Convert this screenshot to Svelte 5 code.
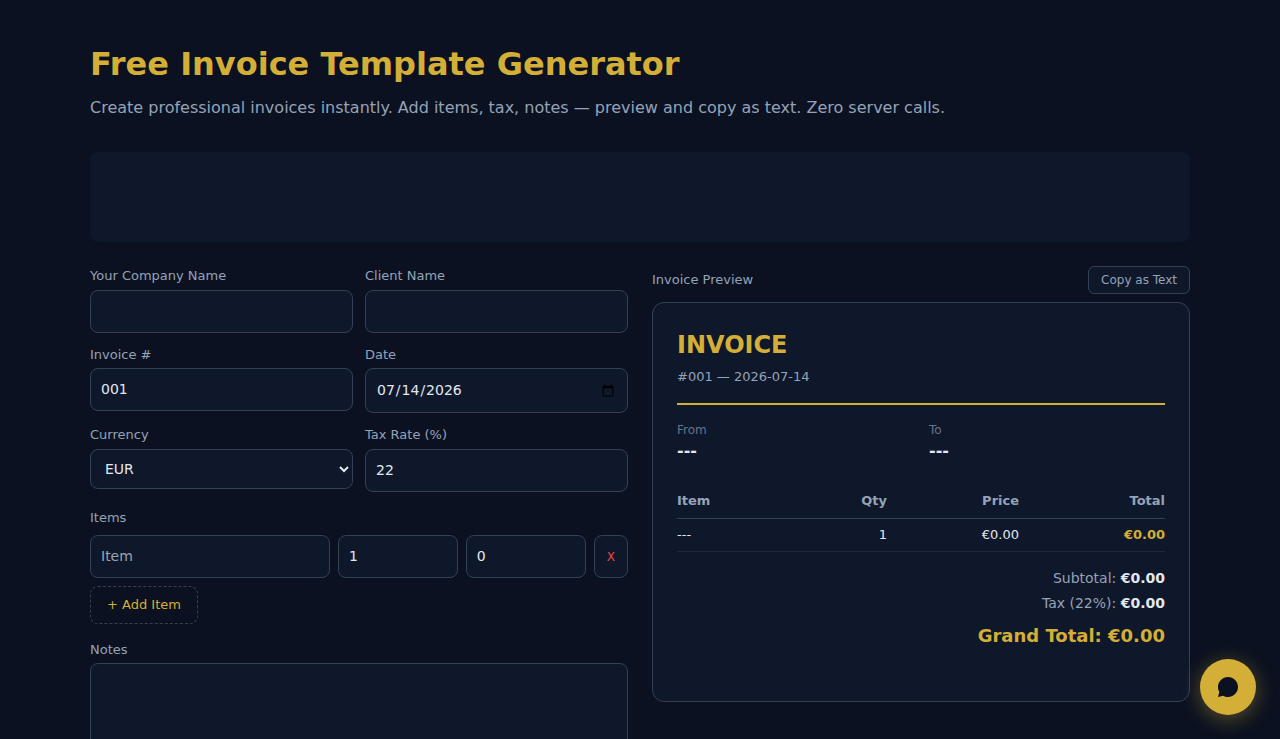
<script>
  let company = '';
  let client = '';
  let invoiceNumber = '001';
  let date = '2026-07-14';
  let currency = 'EUR';
  let taxRate = 22;
  let notes = '';
  let items = [{ name: '', qty: 1, price: 0 }];

  const symbols = { EUR: '€', USD: '$', GBP: '£' };

  $: symbol = symbols[currency];
  $: subtotal = items.reduce((sum, item) => sum + lineTotal(item), 0);
  $: tax = subtotal * ((Number(taxRate) || 0) / 100);
  $: grandTotal = subtotal + tax;

  function lineTotal(item) {
    return (Number(item.qty) || 0) * (Number(item.price) || 0);
  }

  function money(value, sym) {
    return sym + (Number(value) || 0).toFixed(2);
  }

  function addItem() {
    items = [...items, { name: '', qty: 1, price: 0 }];
  }

  function removeItem(index) {
    if (items.length > 1) {
      items = items.filter((_, i) => i !== index);
    }
  }

  function copyAsText() {
    const lines = [
      'INVOICE #' + invoiceNumber,
      'Date: ' + date,
      'From: ' + (company || '---'),
      'To: ' + (client || '---'),
      '',
      ...items.map((item) => `${item.name || '---'} x${item.qty} = ${money(lineTotal(item), symbol)}`),
      '',
      'Subtotal: ' + money(subtotal, symbol),
      `Tax (${taxRate}%): ` + money(tax, symbol),
      'Grand Total: ' + money(grandTotal, symbol)
    ];
    if (notes) lines.push('', notes);
    navigator.clipboard?.writeText(lines.join('\n'));
  }
</script>

<main class="container">
  <h1>Free Invoice Template Generator</h1>
  <p class="subtitle">Create professional invoices instantly. Add items, tax, notes — preview and copy as text. Zero server calls.</p>

  <div class="banner"></div>

  <div class="columns">
    <section class="form">
      <div class="fields">
        <div>
          <label for="company">Your Company Name</label>
          <input id="company" type="text" bind:value={company} />
        </div>
        <div>
          <label for="client">Client Name</label>
          <input id="client" type="text" bind:value={client} />
        </div>
        <div>
          <label for="number">Invoice #</label>
          <input id="number" type="text" bind:value={invoiceNumber} />
        </div>
        <div>
          <label for="date">Date</label>
          <input id="date" type="date" bind:value={date} />
        </div>
        <div>
          <label for="currency">Currency</label>
          <select id="currency" bind:value={currency}>
            <option>EUR</option>
            <option>USD</option>
            <option>GBP</option>
          </select>
        </div>
        <div>
          <label for="tax">Tax Rate (%)</label>
          <input id="tax" type="number" bind:value={taxRate} />
        </div>
      </div>

      <div class="items">
        <div class="items-label">Items</div>
        {#each items as item, i}
          <div class="item-row">
            <input type="text" placeholder="Item" aria-label="Item" bind:value={item.name} />
            <input type="number" aria-label="Quantity" bind:value={item.qty} />
            <input type="number" aria-label="Price" bind:value={item.price} />
            <button class="remove" type="button" on:click={() => removeItem(i)}>X</button>
          </div>
        {/each}
        <button class="add" type="button" on:click={addItem}>+ Add Item</button>
      </div>

      <div>
        <label for="notes">Notes</label>
        <textarea id="notes" rows="4" bind:value={notes}></textarea>
      </div>
    </section>

    <section>
      <div class="preview-header">
        <span>Invoice Preview</span>
        <button class="copy" type="button" on:click={copyAsText}>Copy as Text</button>
      </div>

      <div class="preview">
        <div class="invoice-head">
          <h2>INVOICE</h2>
          <div class="meta">#{invoiceNumber} — {date}</div>
        </div>

        <div class="parties">
          <div>
            <div class="party-label">From</div>
            <div class="party-name">{company || '---'}</div>
          </div>
          <div>
            <div class="party-label">To</div>
            <div class="party-name">{client || '---'}</div>
          </div>
        </div>

        <table>
          <thead>
            <tr>
              <th>Item</th>
              <th>Qty</th>
              <th>Price</th>
              <th>Total</th>
            </tr>
          </thead>
          <tbody>
            {#each items as item}
              <tr>
                <td>{item.name || '---'}</td>
                <td>{item.qty}</td>
                <td>{money(item.price, symbol)}</td>
                <td class="line-total">{money(lineTotal(item), symbol)}</td>
              </tr>
            {/each}
          </tbody>
        </table>

        <div class="totals">
          <div class="total-line">Subtotal: <strong>{money(subtotal, symbol)}</strong></div>
          <div class="total-line">Tax ({taxRate}%): <strong>{money(tax, symbol)}</strong></div>
          <div class="grand">Grand Total: {money(grandTotal, symbol)}</div>
        </div>

        {#if notes}
          <p class="preview-notes">{notes}</p>
        {/if}
      </div>
    </section>
  </div>
</main>

<button class="chat" type="button" aria-label="Open chat">
  <svg width="24" height="24" viewBox="0 0 24 24" fill="currentColor" aria-hidden="true">
    <path d="M12 2C6.48 2 2 6.48 2 12c0 1.82.49 3.53 1.34 5L2 22l5-1.34C8.47 21.51 10.18 22 12 22c5.52 0 10-4.48 10-10S17.52 2 12 2z" />
  </svg>
</button>

<style>
  :global(body) {
    margin: 0;
    background: #0b1120;
    color: #e2e8f0;
    font-family: "DejaVu Sans", sans-serif;
    font-size: 16px;
    line-height: 1.5;
  }

  .container {
    max-width: 1100px;
    margin: 0 auto;
    padding: 40px 20px;
  }

  h1 {
    margin: 0 0 8px;
    font-size: 32px;
    color: #d4af37;
  }

  .subtitle {
    margin: 0 0 32px;
    color: #94a3b8;
  }

  .banner {
    height: 90px;
    margin-bottom: 24px;
    border-radius: 8px;
    background: #0f172a;
  }

  .columns {
    display: grid;
    grid-template-columns: 1fr 1fr;
    align-items: start;
    gap: 24px;
  }

  .form {
    display: flex;
    flex-direction: column;
    gap: 16px;
  }

  .fields {
    display: grid;
    grid-template-columns: 1fr 1fr;
    gap: 12px;
  }

  label,
  .items-label {
    display: block;
    margin-bottom: 4px;
    font-size: 13px;
    color: #94a3b8;
  }

  .items-label {
    margin-bottom: 8px;
  }

  input,
  select,
  textarea {
    display: block;
    box-sizing: border-box;
    width: 100%;
    min-width: 0;
    margin: 0;
    padding: 10px;
    border: 1px solid #334155;
    border-radius: 8px;
    background: #0f172a;
    color: #e2e8f0;
    font-family: inherit;
    font-size: 14px;
    line-height: 1.5;
  }

  input::placeholder {
    color: #9ca3af;
  }

  textarea {
    resize: vertical;
  }

  button {
    font-family: inherit;
    line-height: 1.5;
    cursor: pointer;
  }

  .item-row {
    display: grid;
    grid-template-columns: 2fr 1fr 1fr auto;
    gap: 8px;
    margin-bottom: 8px;
  }

  .remove {
    padding: 0 12px;
    border: 1px solid #334155;
    border-radius: 8px;
    background: #0f172a;
    color: #ef4444;
    font-size: 12px;
  }

  .add {
    display: block;
    padding: 8px 16px;
    border: 1px dashed #334155;
    border-radius: 8px;
    background: transparent;
    color: #d4af37;
    font-size: 13px;
  }

  .preview-header {
    display: flex;
    align-items: center;
    justify-content: space-between;
    margin-bottom: 8px;
    font-size: 13px;
    color: #94a3b8;
  }

  .copy {
    padding: 4px 12px;
    border: 1px solid #334155;
    border-radius: 6px;
    background: #0f172a;
    color: #94a3b8;
    font-size: 12px;
  }

  .preview {
    box-sizing: border-box;
    min-height: 400px;
    padding: 24px;
    border: 1px solid #334155;
    border-radius: 12px;
    background: #0f172a;
  }

  .invoice-head {
    margin-bottom: 16px;
    padding-bottom: 16px;
    border-bottom: 2px solid #d4af37;
  }

  h2 {
    margin: 0 0 4px;
    font-size: 24px;
    color: #d4af37;
  }

  .meta {
    font-size: 13px;
    color: #94a3b8;
  }

  .parties {
    display: grid;
    grid-template-columns: 1fr 1fr;
    gap: 16px;
    margin-bottom: 20px;
  }

  .party-label {
    font-size: 12px;
    color: #64748b;
  }

  .party-name {
    font-weight: bold;
  }

  table {
    width: 100%;
    margin-bottom: 16px;
    border-collapse: collapse;
    font-size: 13px;
  }

  th {
    padding: 8px 0;
    border-bottom: 1px solid #334155;
    color: #94a3b8;
    text-align: right;
  }

  td {
    padding: 6px 0;
    border-bottom: 1px solid #1e293b;
    text-align: right;
  }

  th:first-child,
  td:first-child {
    text-align: left;
  }

  .line-total {
    color: #d4af37;
    font-weight: bold;
  }

  .totals {
    text-align: right;
  }

  .total-line {
    margin-bottom: 4px;
    font-size: 14px;
    color: #94a3b8;
  }

  .total-line strong {
    color: #e2e8f0;
  }

  .grand {
    margin-top: 8px;
    font-size: 18px;
    font-weight: bold;
    color: #d4af37;
  }

  .preview-notes {
    margin: 16px 0 0;
    font-size: 13px;
    color: #94a3b8;
    white-space: pre-wrap;
  }

  .chat {
    position: fixed;
    right: 24px;
    bottom: 24px;
    display: flex;
    align-items: center;
    justify-content: center;
    width: 56px;
    height: 56px;
    padding: 0;
    border: none;
    border-radius: 50%;
    background: #d4af37;
    color: #0b1120;
    box-shadow: 0 4px 20px rgba(212, 175, 55, 0.4);
  }

  @media (max-width: 768px) {
    .columns {
      grid-template-columns: 1fr;
    }
  }
</style>
